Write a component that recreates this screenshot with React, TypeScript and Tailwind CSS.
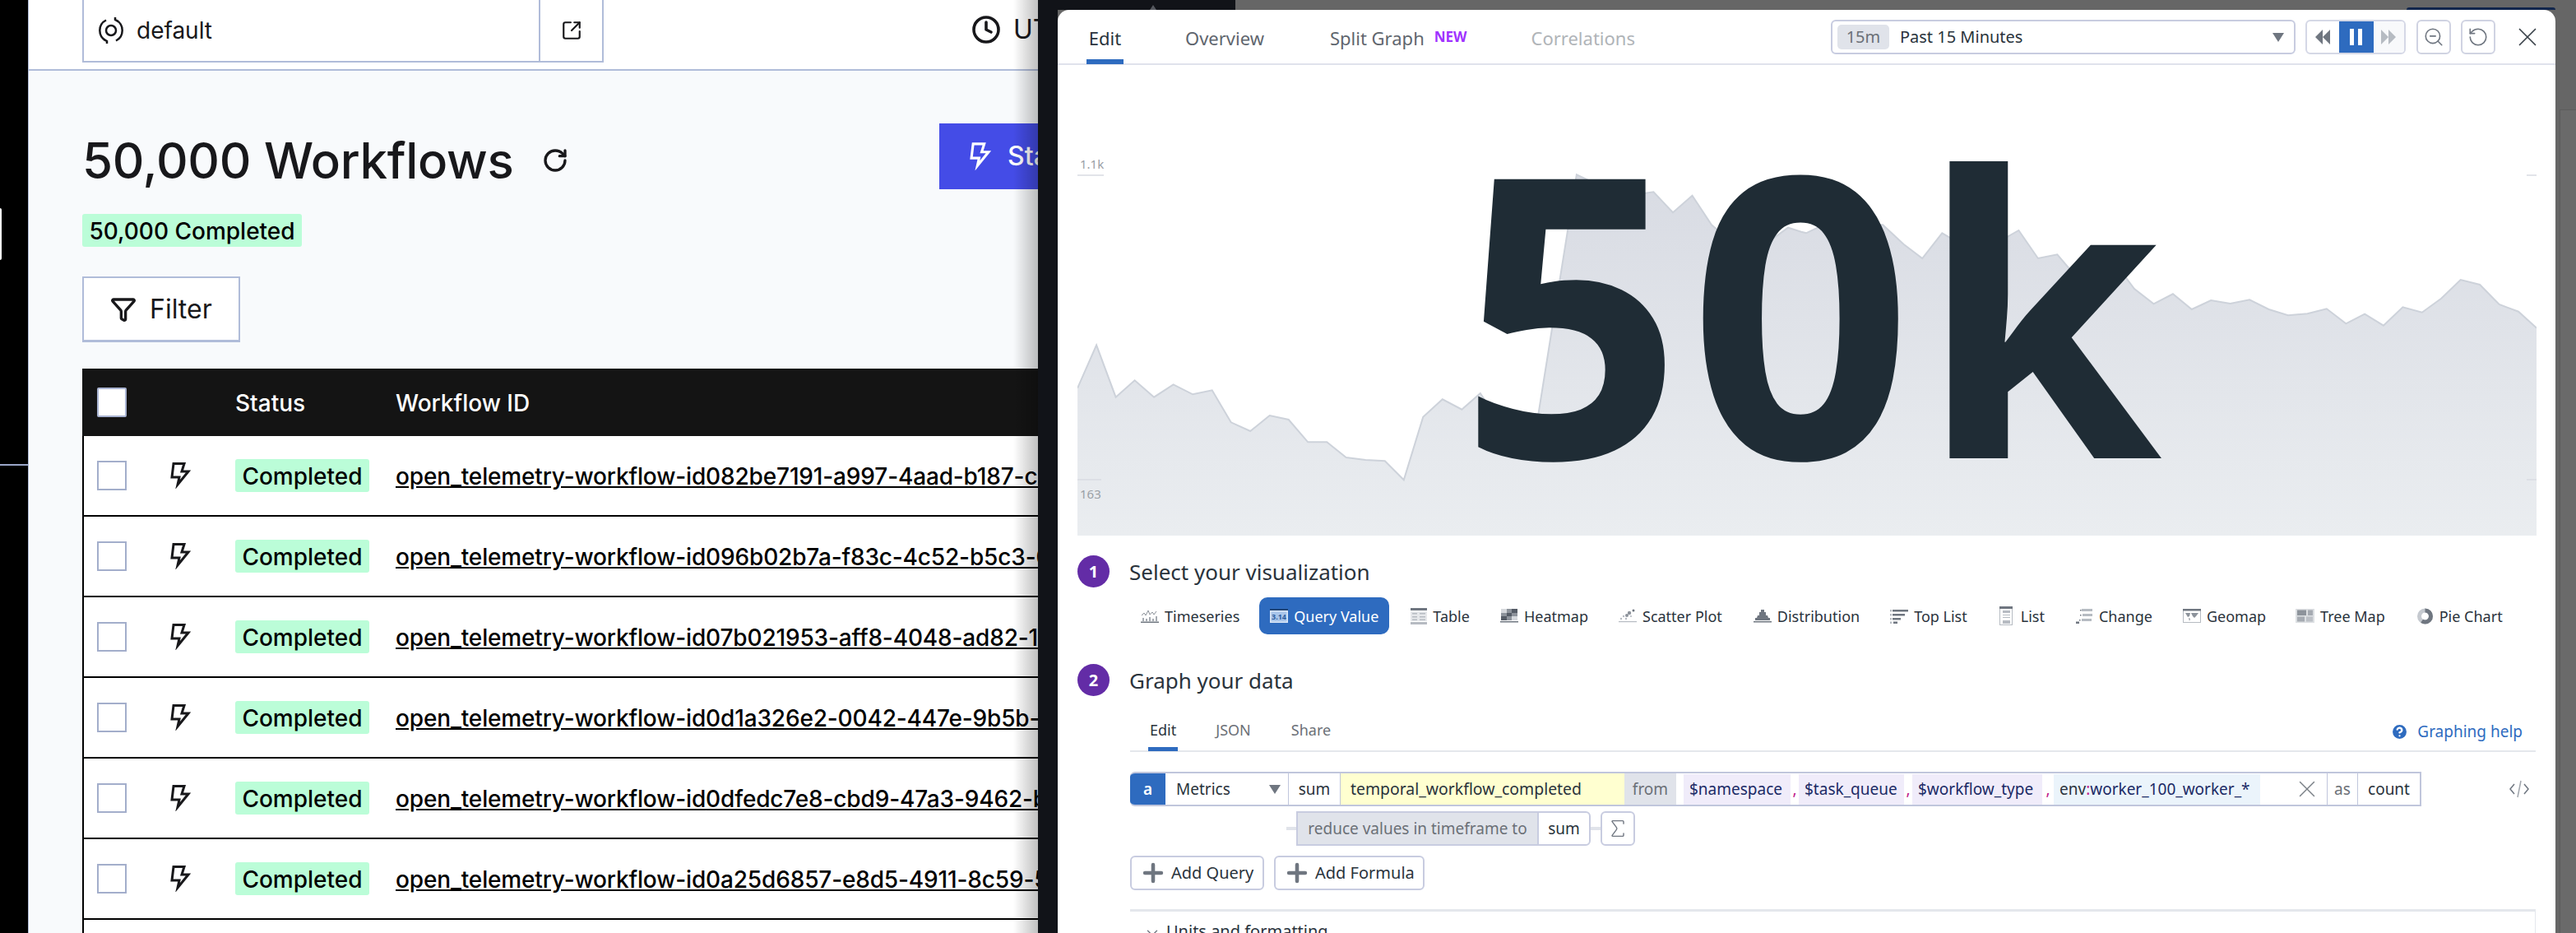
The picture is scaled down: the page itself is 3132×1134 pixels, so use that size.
import React from "react";
import { RotateCw, Filter, Clock, SquareArrowOutUpRight, ChevronDown, Plus, X, RotateCcw, ZoomOut, HelpCircle, Sigma } from "lucide-react";

const inter = "font-['Inter',sans-serif]";
const noto = "font-['Noto_Sans','Open_Sans',sans-serif]";

const Bolt = ({ className = "" }: { className?: string }) => (
  <svg viewBox="0 0 25 32" className={className} fill="none" stroke="currentColor" strokeWidth="3" strokeLinejoin="miter" strokeMiterlimit="8">
    <path d="M4 1.5H17L14 11H22L9 27L11 18H2Z" />
  </svg>
);

const ids = [
  "082be7191-a997-4aad-b187-c41c7e0a92f3",
  "096b02b7a-f83c-4c52-b5c3-07d1e2a4c6b8",
  "07b021953-aff8-4048-ad82-1b6f3c9e7d20",
  "0d1a326e2-0042-447e-9b5b-3e8a1f6d4c07",
  "0dfedc7e8-cbd9-47a3-9462-b7c2e5a09f14",
  "0a25d6857-e8d5-4911-8c59-5f0d3b7a1e62",
];

const z1 = [[35,905],[75,748],[116,938],[156,877],[197,938],[238,892],[279,928],[320,913],[360,1030],[401,1062],[442,1005],[482,1020],[523,1102],[563,1102],[604,1158],[645,1167],[686,1171],[726,1240],[767,1010],[808,946],[849,983],[888,924],[929,1030],[970,1040],[1011,1000],[1092,127],[1133,160],[1174,170],[1214,200],[1255,190],[1296,265],[1337,203],[1378,310],[1418,370],[1459,400],[1500,370],[1540,320]];
const z2 = [[0,335],[10,340],[45,310],[125,310],[165,310],[207,380],[245,432],[285,340],[323,380],[362,400],[401,370],[440,330],[479,432],[518,418],[557,500],[596,470],[635,450],[674,543],[713,598],[752,562],[790,618],[829,585],[868,597],[907,583],[946,618],[985,640],[1024,634],[1063,616],[1102,670],[1140,635],[1178,677],[1217,610],[1256,629],[1295,578],[1334,510],[1373,528],[1412,600],[1451,626],[1488,686]];
const line = [
  ...z1.map(([x, y]) => [1290 + x / 1.742 - 1310, y / 3]),
  ...z2.map(([x, y]) => [2190 + x / 1.664 - 1310, y / 3]),
].map((p) => p.map((n) => n.toFixed(1)).join(",")).join(" ");

const Icn = ({ kind }: { kind: string }) => {
  const g = "#6f7680";
  const l = "#b6bbc2";
  if (kind === "timeseries")
    return (
      <svg width="22" height="16" viewBox="0 0 22 16">
        <path d="M1 7l3-3 2 3 3-6 2 5 3-3 2 3 3-4" fill="none" stroke="#8a9098" strokeWidth="1" />
        <path d="M2 10h2v4H2zM6 11h2v3H6zM10 9h2v5h-2zM14 11h2v3h-2zM18 8h2v6h-2z" fill="#a6abb2" />
        <rect y="14.5" width="22" height="1.5" fill={g} />
      </svg>
    );
  if (kind === "query")
    return (
      <svg width="22" height="17" viewBox="0 0 22 17">
        <rect width="22" height="17" fill="#dbe7f7" />
        <rect width="22" height="2" fill="#1f4476" />
        <rect x="1.5" y="3.5" width="19" height="12" fill="#a9c5ea" />
        <text x="11" y="13" textAnchor="middle" fontSize="9" fontWeight="700" fill="#2e5e9f" fontFamily="'Noto Sans',sans-serif">3.14</text>
      </svg>
    );
  if (kind === "table")
    return (
      <svg width="20" height="20" viewBox="0 0 20 20">
        <rect width="20" height="3" fill={g} />
        <rect y="4" width="20" height="12" fill="#e6e8eb" />
        <path d="M2 6h6v1.5H2zM11 6h7v1.5h-7zM2 10h6v1.5H2zM11 10h7v1.5h-7zM2 13.5h6V15H2zM11 13.5h7V15h-7z" fill={l} />
        <rect y="17" width="20" height="3" fill={l} />
      </svg>
    );
  if (kind === "heatmap")
    return (
      <svg width="22" height="17" viewBox="0 0 22 17">
        <path d="M1 0h20v14H1z" fill="#d5d8dc" />
        <path d="M14 0h7v5h-7zM8 5h6v4H8zM1 9h7v5H1z" fill="#555c66" />
        <path d="M8 0h6v5H8zM14 5h7v4h-7zM1 5h7v4H1zM8 9h6v5H8z" fill="#8d939b" />
        <rect y="15" width="22" height="1.5" fill={g} />
      </svg>
    );
  if (kind === "scatter")
    return (
      <svg width="22" height="17" viewBox="0 0 22 17" fill={l}>
        <circle cx="3" cy="12" r="1.2" /><circle cx="6" cy="9" r="1.2" /><circle cx="10" cy="8" r="2" fill="#8d939b" />
        <circle cx="13" cy="5" r="2.2" fill="#8d939b" /><circle cx="18" cy="2" r="1.5" fill={g} /><circle cx="9" cy="12" r="1.2" /><circle cx="15" cy="9" r="1.1" />
        <rect y="15" width="22" height="1.2" fill={l} />
      </svg>
    );
  if (kind === "distribution")
    return (
      <svg width="22" height="17" viewBox="0 0 22 17">
        <path d="M9 1h4v3h2v4h2l1 3h2v3H2v-3h2l1-3h2V4h2z" fill={g} />
        <rect y="15" width="22" height="1.5" fill={g} />
      </svg>
    );
  if (kind === "toplist")
    return (
      <svg width="22" height="18" viewBox="0 0 22 18" fill={g}>
        <path d="M3 1h19v2.5H3zM3 6h15v2.5H3zM3 11h10v2.5H3zM4 15.5h5V18H4z" />
        <path d="M0 1h2v2.5H0zM0 6h2v2.5H0zM0 11h2v2.5H0zM0 15.5h2V18H0z" fill={l} />
      </svg>
    );
  if (kind === "list")
    return (
      <svg width="16" height="23" viewBox="0 0 16 23">
        <rect x="0.5" y="0.5" width="15" height="22" fill="#fff" stroke={l} />
        <rect width="16" height="3" fill={g} />
        <path d="M4 5h9v3H4zM4 10h9v1H4zM4 13h9v1H4zM4 17h9v4H4z" fill={l} />
      </svg>
    );
  if (kind === "change")
    return (
      <svg width="21" height="19" viewBox="0 0 21 19" fill={l}>
        <path d="M7 1h13v3H7zM8 7h12v3H8zM7 13h12v3H7z" />
        <path d="M5 2h1.5v1.5H5zM5 8h1.5v1.5H5zM4 14h1.5v1.5H4zM0 16.5h4V19H0z" fill={g} />
      </svg>
    );
  if (kind === "geomap")
    return (
      <svg width="22" height="17" viewBox="0 0 22 17">
        <rect x="0.5" y="0.5" width="21" height="16" fill="#fff" stroke={l} />
        <rect width="22" height="2.5" fill={g} />
        <path d="M3 5h6L8 9l-2 1zM10 5h9l-3 4-2 2-2-2zM7 11l2 1-1 3z" fill="#8d939b" />
      </svg>
    );
  if (kind === "treemap")
    return (
      <svg width="23" height="17" viewBox="0 0 23 17">
        <rect width="23" height="17" fill="#dcdfe2" />
        <rect x="2" y="1.5" width="11" height="6.5" fill="#8d939b" />
        <rect x="15" y="1.5" width="6" height="6.5" fill="#a6abb2" />
        <rect x="2" y="9.5" width="9" height="6" fill="#a6abb2" />
        <rect x="13" y="9.5" width="8" height="6" fill="#bcc0c6" />
      </svg>
    );
  return (
    <svg width="21" height="20" viewBox="0 0 21 20">
      <circle cx="10.5" cy="10" r="7" fill="none" stroke="#c5c9cf" strokeWidth="5" />
      <circle cx="10.5" cy="10" r="7" fill="none" stroke={g} strokeWidth="5" strokeDasharray="26 44" transform="rotate(-90 10.5 10)" />
    </svg>
  );
};

const Viz = ({ kind, label, className = "", active }: { kind: string; label: string; className?: string; active?: boolean }) => (
  <div className={`flex h-[45px] items-center gap-[7px] rounded-[10px] ${active ? "bg-[#2e6bbf] text-white" : "text-[#2a333c]"} ${className}`}>
    <Icn kind={kind} />
    <span className="pt-[2px]">{label}</span>
  </div>
);

const Tag = ({ t, className = "" }: { t: string; className?: string }) => (
  <span className={`flex h-[37px] items-center bg-[#f0ecfa] px-[7px] text-[#1b2a66] ${className}`}>{t}</span>
);
const Comma = ({ className = "" }: { className?: string }) => (
  <span className={`w-[10px] text-center text-[#c0208a] ${className}`}>,</span>
);

export default function App() {
  return (
    <div className="flex h-[1134px] w-[3132px] overflow-hidden bg-black">
      {/* far left strip */}
      <div className="flex h-full w-[34px] shrink-0 flex-col bg-black">
        <div className="mt-[253px] h-[63px] w-[2px] rounded-r bg-white" />
        <div className="mt-[248px] h-[2px] w-full bg-[#9aa6c8]" />
      </div>

      {/* Temporal page */}
      <div className={`relative h-full w-[1228px] shrink-0 overflow-hidden border-l border-[#b0bcd9] bg-[#f8fafc] ${inter} text-[28px] font-medium text-[#18181b]`}>
        <div className="flex h-[86px] items-start border-b-2 border-[#b0bcd9] bg-white">
          <div className="ml-[65px] flex h-[76px] w-[634px] shrink-0 border-x-2 border-b-2 border-[#b0bcd9]">
            <div className="flex flex-1 items-center gap-[15px] pl-[17px]">
              <svg width="32" height="32" viewBox="0 0 32 32" fill="none" stroke="#18181b" strokeWidth="2.5">
                <circle cx="16" cy="16" r="6" />
                <path d="M10 3.5A14 14 0 0 0 10 28.5M22 28.5A14 14 0 0 0 22 3.5" />
                <path d="M7 27l4 2 0 3M25 5l-4-2 0-3" />
              </svg>
              <span className="font-normal">default</span>
            </div>
            <div className="flex w-[77px] items-center justify-center border-l-2 border-[#b0bcd9]">
              <SquareArrowOutUpRight size={26} strokeWidth={2} />
            </div>
          </div>
          <div className="ml-[447px] flex h-[72px] shrink-0 items-center gap-[15px]">
            <Clock size={36} strokeWidth={2.4} />
            <span className="text-[32px] font-normal">UTC</span>
          </div>
        </div>

        <div className="pl-[65px]">
          <div className="mt-[64px] flex h-[80px] items-start">
            <div className="flex w-[1042px] shrink-0 items-start gap-[35px]">
              <h1 className="mt-[5px] text-[60px] leading-[80px] font-medium tracking-[-0.3px]">50,000 Workflows</h1>
              <RotateCw size={32} strokeWidth={2.5} className="mt-[29px]" />
            </div>
            <div className="flex h-[80px] w-[340px] shrink-0 items-center gap-[20px] bg-[#444ce7] pl-[37px] text-[32px] text-white">
              <Bolt className="h-[34px] w-[26px] shrink-0" />
              <span className="whitespace-nowrap">Start Workflow</span>
            </div>
          </div>

          <div className="mt-[30px] flex h-[40px] w-[267px] items-center justify-center rounded-[3px] bg-[#bbfdd8] pt-[1px] whitespace-nowrap text-black">50,000 Completed</div>

          <div className="mt-[36px] flex h-[80px] w-[192px] items-center gap-[16px] border-2 border-b-[3px] border-[#b0bcd9] bg-white pl-[32px] text-[32px] font-normal">
            <Filter size={32} strokeWidth={2.5} />
            <span>Filter</span>
          </div>

          <div className="mt-[32px] w-[1400px]">
            <div className="flex h-[82px] items-center bg-[#141414] pl-[18px] text-white">
              <div className="h-[36px] w-[36px] rounded-[2px] border-2 border-[#a9b4d2] bg-white" />
              <span className="ml-[132px] w-[195px] pt-[2px]">Status</span>
              <span className="pt-[2px]">Workflow ID</span>
            </div>
            <div className="border-l-2 border-black bg-white">
              {ids.map((id) => (
                <div key={id} className="flex h-[98px] items-center border-b-2 border-black pl-[16px]">
                  <div className="h-[36px] w-[36px] shrink-0 border-2 border-[#a3aecb] bg-white" />
                  <Bolt className="ml-[53px] h-[32px] w-[25px] shrink-0 text-[#18181b]" />
                  <span className="ml-[54px] flex h-[40px] w-[163px] shrink-0 items-center justify-center rounded-[3px] bg-[#bbfdd8] pt-[1px] text-black">Completed</span>
                  <a className="ml-[32px] whitespace-nowrap pt-[2px] tracking-[-0.15px] text-black underline">open_telemetry-workflow-id{id}</a>
                </div>
              ))}
              <div className="h-[60px]" />
            </div>
          </div>
        </div>
        <div className="absolute inset-y-0 right-0 w-[30px] bg-gradient-to-r from-transparent to-black/25" />
      </div>

      {/* overlay region */}
      <div className="flex h-full min-w-0 flex-1 flex-col bg-[#666666]">
        <div className="flex h-[12px] shrink-0">
          <div className="flex h-full w-[240px] justify-start bg-[#111318] pl-[132px]">
            <svg width="16" height="12" viewBox="0 0 16 12"><path d="M8 6L12 12H4Z" fill="#55585e" /></svg>
          </div>
          <div className="ml-[1424px] mt-[9px] h-[3px] w-[181px] rounded-t bg-[#12264c]" />
        </div>
        <div className="flex min-h-0 flex-1">
          <div className="w-[24px] shrink-0 bg-[#111318]" />
          <div className={`h-full w-[1821px] shrink-0 overflow-hidden rounded-t-[14px] bg-white ${noto} text-[#2a333c]`}>
            {/* Top tabs */}
            <div className="flex h-[67px] items-start border-b-2 border-[#e0e2ec] pl-[35px] text-[22px]">
              <div className="flex h-[66px] w-[45px] flex-col items-center justify-between border-b-[6px] border-[#2e6bbf] pt-[19px]"><span className="leading-[30px]">Edit</span></div>
              <span className="ml-[75px] mt-[19px] leading-[30px] text-[#5f666e]">Overview</span>
              <span className="ml-[80px] mt-[19px] leading-[30px] text-[#5f666e]">Split Graph</span>
              <span className="ml-[12px] mt-[22px] text-[17px] leading-[22px] font-bold text-[#a033ff]">NEW</span>
              <span className="ml-[78px] mt-[19px] leading-[30px] text-[#b0b4b8]">Correlations</span>
              <div className="ml-[238px] mt-[12px] flex h-[42px] w-[565px] shrink-0 items-center rounded-[6px] border-2 border-[#c8cce0] pl-[6px] text-[20px]">
                <span className="flex h-[30px] w-[63px] items-center justify-center rounded-[5px] bg-[#e0e3ea] text-[#6b7077]">15m</span>
                <span className="ml-[13px] text-[#2a333c]">Past 15 Minutes</span>
                <span className="ml-auto mr-[12px] h-0 w-0 border-x-[7px] border-t-[11px] border-x-transparent border-t-[#6f7680]" />
              </div>
              <div className="ml-[12px] mt-[12px] flex h-[42px] w-[122px] shrink-0 overflow-hidden rounded-[6px] border-2 border-[#d5d8e6]">
                <div className="flex w-[39px] items-center justify-center text-[#6f7680]">
                  <svg width="20" height="18" viewBox="0 0 20 18" fill="currentColor"><path d="M10 0v18L1 9zM19 0v18l-9-9z" /></svg>
                </div>
                <div className="flex w-[42px] items-center justify-center gap-[5px] bg-[#2e6bbf]">
                  <span className="h-[20px] w-[5px] bg-white" /><span className="h-[20px] w-[5px] bg-white" />
                </div>
                <div className="flex flex-1 items-center justify-center bg-[#f8f9fb] text-[#b6bbc2]">
                  <svg width="20" height="18" viewBox="0 0 20 18" fill="currentColor"><path d="M1 0v18l9-9zM10 0v18l9-9z" /></svg>
                </div>
              </div>
              <div className="ml-[13px] mt-[12px] flex h-[42px] w-[42px] shrink-0 items-center justify-center rounded-[6px] border-2 border-[#d0d3e2] text-[#6f7680]"><ZoomOut size={26} strokeWidth={1.5} /></div>
              <div className="ml-[12px] mt-[12px] flex h-[42px] w-[42px] shrink-0 items-center justify-center rounded-[6px] border-2 border-[#d0d3e2] text-[#6f7680]"><RotateCcw size={26} strokeWidth={1.5} /></div>
              <X className="ml-[20px] mt-[14px] shrink-0 text-[#3a4249]" size={38} strokeWidth={1.1} />
            </div>

            {/* Chart */}
            <div className="px-[24px]">
              <div className="relative mt-[91px] h-[481px] w-[1774px]">
                <svg className="absolute inset-0" width="1774" height="481" viewBox="0 0 1774 481">
                  <defs>
                    <linearGradient id="fillg" x1="0" y1="0" x2="0" y2="1">
                      <stop offset="0" stopColor="#d8dbe3" />
                      <stop offset="1" stopColor="#eaedf0" />
                    </linearGradient>
                  </defs>
                  <polygon points={`0,481 ${line} 1774,481`} fill="url(#fillg)" />
                  <polyline points={line} fill="none" stroke="#cdd2da" strokeWidth="2" />
                  <path d="M0 43h32M0 413h29M1762 43h12M1762 413h12" stroke="#d9dce2" strokeWidth="1.5" />
                </svg>
                <span className="absolute left-[3px] top-[19px] text-[15px] leading-[20px] text-[#9aa0a6]">1.1k</span>
                <span className="absolute left-[3px] top-[420px] text-[15px] leading-[20px] text-[#9aa0a6]">163</span>
                <span className="absolute left-[464px] top-[-125px] text-[475px] leading-[655px] font-bold tracking-[8px] text-[#1f2c35]">50k</span>
              </div>

              {/* Step 1 */}
              <div className="mt-[24px] flex h-[39px] items-center gap-[24px]">
                <span className="flex h-[39px] w-[39px] items-center justify-center rounded-full bg-[#632ca6] text-[20px] font-bold text-white">1</span>
                <span className="pt-[2px] text-[26px]">Select your visualization</span>
              </div>
              <div className="mt-[12px] flex items-center pl-[77px] text-[18px]">
                <Viz kind="timeseries" label="Timeseries" />
                <Viz kind="query" label="Query Value" active className="ml-[24px] px-[13px]" />
                <Viz kind="table" label="Table" className="ml-[26px]" />
                <Viz kind="heatmap" label="Heatmap" className="ml-[37px]" />
                <Viz kind="scatter" label="Scatter Plot" className="ml-[37px]" />
                <Viz kind="distribution" label="Distribution" className="ml-[38px]" />
                <Viz kind="toplist" label="Top List" className="ml-[37px]" />
                <Viz kind="list" label="List" className="ml-[39px] gap-[10px]" />
                <Viz kind="change" label="Change" className="ml-[38px]" />
                <Viz kind="geomap" label="Geomap" className="ml-[37px]" />
                <Viz kind="treemap" label="Tree Map" className="ml-[36px]" />
                <Viz kind="pie" label="Pie Chart" className="ml-[38px]" />
              </div>

              {/* Step 2 */}
              <div className="mt-[36px] flex h-[39px] items-center gap-[24px]">
                <span className="flex h-[39px] w-[39px] items-center justify-center rounded-full bg-[#632ca6] text-[20px] font-bold text-white">2</span>
                <span className="pt-[2px] text-[26px]">Graph your data</span>
              </div>

              <div className="ml-[64px] mt-[20px] flex h-[48px] items-start border-b-2 border-[#e4e7ec] text-[18px]">
                <span className="ml-[22px] flex h-[47px] items-start border-b-[5px] border-[#2e6bbf] px-[2px] pt-[8px]">Edit</span>
                <span className="ml-[46px] pt-[8px] text-[#6b7077]">JSON</span>
                <span className="ml-[49px] pt-[8px] text-[#6b7077]">Share</span>
                <span className="ml-auto mr-[16px] mt-[9px] flex items-center gap-[10px] text-[19px] text-[#2e6bbf]">
                  <HelpCircle size={23} fill="#2e6bbf" stroke="#fff" strokeWidth={2.4} />
                  Graphing help
                </span>
              </div>

              {/* Query row */}
              <div className="ml-[64px] mt-[24px] flex h-[42px] items-center text-[19px]">
                <div className="flex h-[42px] w-[1570px] items-center overflow-hidden rounded-l-[6px] border-y-2 border-r-2 border-[#c0c6dc]">
                  <span className="-my-[2px] flex h-[42px] w-[43px] items-center justify-center bg-[#2e6bbf] font-semibold text-white">a</span>
                  <span className="flex h-full w-[150px] items-center justify-between border-r border-[#c0c6dc] pl-[13px] pr-[9px]">
                    Metrics
                    <span className="h-0 w-0 border-x-[7px] border-t-[11px] border-x-transparent border-t-[#6f7680]" />
                  </span>
                  <span className="flex h-full w-[63px] items-center justify-center border-r border-[#c0c6dc]">sum</span>
                  <span className="flex h-full w-[345px] items-center bg-[#ffffd0] pl-[12px] text-[19.4px]">temporal_workflow_completed</span>
                  <span className="flex h-full w-[63px] items-center justify-center bg-[#e0e3ea] text-[#6b7077]">from</span>
                  <span className="flex h-full items-center pl-[9px]">
                    <Tag t="$namespace" className="w-[130px]" />
                    <Comma />
                    <Tag t="$task_queue" className="w-[128px]" />
                    <Comma className="w-[8px]" />
                    <Tag t="$workflow_type" className="w-[158px]" />
                    <Comma className="w-[14px]" />
                    <span className="flex h-[37px] w-[251px] items-center bg-[#ebf4fb] px-[7px] text-[#1b2a66]"><span className="text-[#2a333c]">env</span><span className="text-[#c0208a]">:</span>worker_100_worker_*</span>
                  </span>
                  <X className="ml-[40px] shrink-0 text-[#7a8087]" size={34} strokeWidth={1} />
                  <span className="ml-[7px] flex h-full w-[38px] items-center justify-center border-x border-[#c0c6dc] text-[#6b7077]">as</span>
                  <span className="flex h-full flex-1 items-center justify-center">count</span>
                </div>
                <svg className="ml-[107px]" width="24" height="24" viewBox="0 0 24 24" fill="none" stroke="#6f7680" strokeWidth="1.5"><path d="M6 6l-5 6 5 6M18 6l5 6-5 6" /><path d="M14 2l-4 20" stroke="#a0a5ac" /></svg>
              </div>

              {/* Reduce row */}
              <div className="ml-[254px] mt-[6px] flex h-[42px] items-center text-[19px]">
                <span className="h-[4px] w-[12px] bg-[#e0e3ea]" />
                <span className="flex h-[42px] w-[293px] items-center justify-center border-2 border-r-0 border-[#c8cce0] bg-[#e0e3ea] whitespace-nowrap text-[#6b7077]">reduce values in timeframe to</span>
                <span className="flex h-[42px] w-[65px] items-center justify-center rounded-r-[6px] border-2 border-[#c8cce0]">sum</span>
                <span className="h-[4px] w-[12px] bg-[#e0e3ea]" />
                <span className="flex h-[42px] w-[42px] items-center justify-center rounded-[6px] border-2 border-[#c8cce0] text-[#6f7680]"><Sigma size={28} strokeWidth={1.2} /></span>
              </div>

              {/* Add buttons */}
              <div className="ml-[64px] mt-[12px] flex h-[42px] gap-[12px] text-[20px]">
                <span className="flex w-[163px] items-center gap-[5px] rounded-[6px] border-2 border-[#c8cce0] pl-[9px]"><Plus size={34} strokeWidth={3.2} className="text-[#6f7680]" />Add Query</span>
                <span className="flex w-[183px] items-center gap-[5px] rounded-[6px] border-2 border-[#c8cce0] pl-[9px]"><Plus size={34} strokeWidth={3.2} className="text-[#6f7680]" />Add Formula</span>
              </div>

              {/* Panel */}
              <div className="ml-[64px] mt-[23px] flex h-[60px] items-start gap-[6px] border-t-[3px] border-r border-[#e4e7ec] pl-[16px] pt-[9px] text-[20px]">
                <ChevronDown size={22} strokeWidth={1.5} className="mt-[6px] text-[#6f7680]" />
                <span>Units and formatting</span>
              </div>
            </div>
          </div>
          <div className="flex flex-1 flex-col bg-[#666666] pl-[5px] pt-[121px]">
            <div className="flex-1 border-l border-t border-[#5c5c5c] bg-[#6a6a6a]" />
          </div>
        </div>
      </div>
    </div>
  );
}
